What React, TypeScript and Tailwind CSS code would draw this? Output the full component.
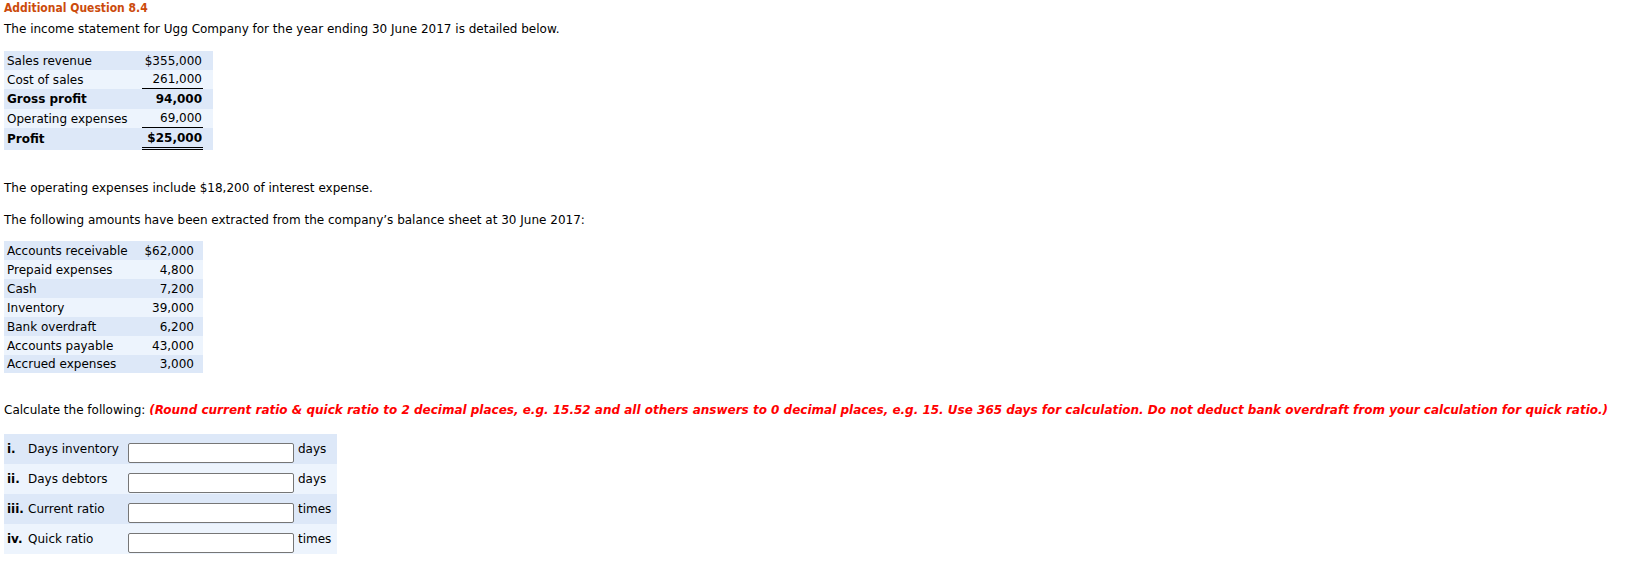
import React from 'react';

const incomeRows = [
  { label: 'Sales revenue', value: '$355,000', h: 'h-[19px]', bold: false, line: '' },
  { label: 'Cost of sales', value: '261,000', h: 'h-[19px]', bold: false, line: 'border-b border-black' },
  { label: 'Gross profit', value: '94,000', h: 'h-[20px]', bold: true, line: '' },
  { label: 'Operating expenses', value: '69,000', h: 'h-[19px]', bold: false, line: 'border-b border-black' },
  { label: 'Profit', value: '$25,000', h: 'h-[22px]', bold: true, line: 'border-b-[3px] border-double border-black' },
];

const balanceRows = [
  ['Accounts receivable', '$62,000'],
  ['Prepaid expenses', '4,800'],
  ['Cash', '7,200'],
  ['Inventory', '39,000'],
  ['Bank overdraft', '6,200'],
  ['Accounts payable', '43,000'],
  ['Accrued expenses', '3,000'],
];

const questions = [
  { num: 'i.', label: 'Days inventory', unit: 'days' },
  { num: 'ii.', label: 'Days debtors', unit: 'days' },
  { num: 'iii.', label: 'Current ratio', unit: 'times' },
  { num: 'iv.', label: 'Quick ratio', unit: 'times' },
];

const rowBg = (i: number) => (i % 2 === 0 ? 'bg-[#dde8f8]' : 'bg-[#edf4fd]');

export default function App() {
  return (
    <div className="min-h-[584px] bg-white pl-[4px] pt-[1px] font-['DejaVu_Sans',Verdana,sans-serif] text-[12px] leading-[14px] text-black">
      <h1 className="font-['DejaVu_Sans_Condensed','DejaVu_Sans',sans-serif] text-[12px] font-bold leading-[14px] text-[#cc4b0b]">
        Additional Question 8.4
      </h1>
      <p className="mt-[7px]">The income statement for Ugg Company for the year ending 30 June 2017 is detailed below.</p>

      {/* Income statement */}
      <div className="mt-[15px] w-[209px]">
        {incomeRows.map((r, i) => (
          <div key={r.label} className={`flex ${r.h} ${rowBg(i)} ${r.bold ? 'font-bold' : ''}`}>
            <div className="flex w-[128px] items-center pl-[3px]">{r.label}</div>
            <div className="ml-[10px] w-[61px]">
              <div className={`flex h-full items-center justify-end pr-[1px] ${r.line}`}>{r.value}</div>
            </div>
          </div>
        ))}
      </div>

      <p className="mt-[31px]">The operating expenses include $18,200 of interest expense.</p>
      <p className="mt-[18px]">The following amounts have been extracted from the company’s balance sheet at 30 June 2017:</p>

      {/* Balance sheet extract */}
      <div className="mt-[14px] w-[199px]">
        {balanceRows.map(([label, value], i) => (
          <div key={label} className={`flex items-center justify-between pl-[3px] pr-[9px] ${i === 6 ? 'h-[18px]' : 'h-[19px]'} ${rowBg(i)}`}>
            <span>{label}</span>
            <span>{value}</span>
          </div>
        ))}
      </div>

      <p className="mt-[30px]">
        Calculate the following:{' '}
        <span className="font-bold italic text-[#ff0000]">
          (Round current ratio &amp; quick ratio to 2 decimal places, e.g. 15.52 and all others answers to 0 decimal places, e.g. 15. Use 365 days for calculation. Do not deduct bank overdraft from your calculation for quick ratio.)
        </span>
      </p>

      {/* Answer inputs */}
      <div className="mt-[17px] w-[333px]">
        {questions.map((q, i) => (
          <div key={q.num} className={`flex h-[30px] items-start pt-[8px] ${rowBg(i)}`}>
            <span className="min-w-[24px] whitespace-nowrap pl-[3px] pr-[3px] font-bold">{q.num}</span>
            <span className="w-[100px] whitespace-nowrap">{q.label}</span>
            <input
              type="text"
              className="mt-[1px] h-[20px] w-[166px] rounded-[2px] border border-[#767676] bg-white"
            />
            <span className="pl-[4px]">{q.unit}</span>
          </div>
        ))}
      </div>
    </div>
  );
}
